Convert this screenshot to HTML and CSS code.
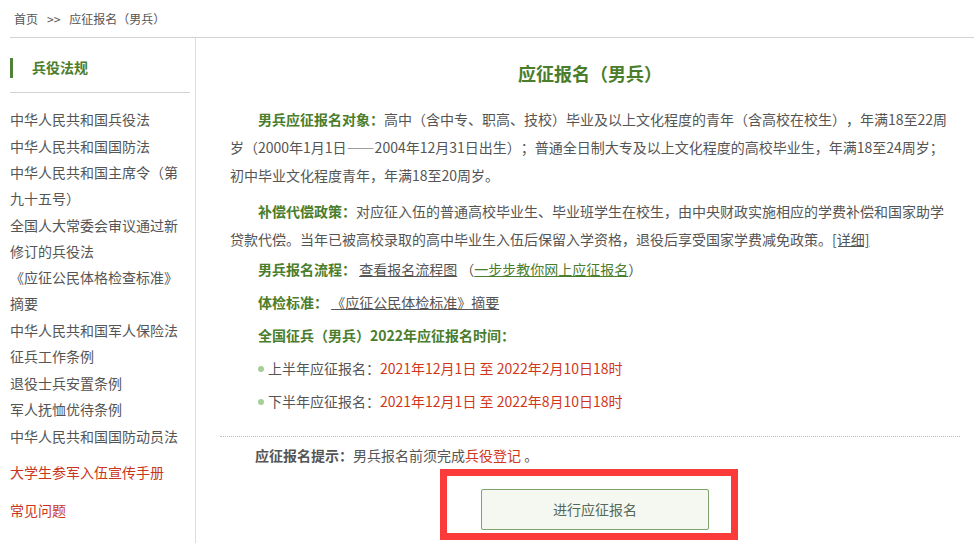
FILE: index.html
```html
<!DOCTYPE html>
<html lang="zh-CN">
<head>
    <meta charset="UTF-8">
    <title>应征报名（男兵）</title>
    <link rel="stylesheet" href="styles.css">
</head>
<body>
    <div class="crumbs">
        <a href="#">首页</a><span class="sep">&gt;&gt;</span><span>应征报名（男兵）</span>
    </div>

    <div class="page">
        <aside class="side">
            <h3 class="side-title">兵役法规</h3>
            <ul class="law-list">
                <li><a href="#">中华人民共和国兵役法</a></li>
                <li><a href="#">中华人民共和国国防法</a></li>
                <li><a href="#">中华人民共和国主席令（第九十五号）</a></li>
                <li><a href="#">全国人大常委会审议通过新修订的兵役法</a></li>
                <li><a href="#">《应征公民体格检查标准》摘要</a></li>
                <li><a href="#">中华人民共和国军人保险法</a></li>
                <li><a href="#">征兵工作条例</a></li>
                <li><a href="#">退役士兵安置条例</a></li>
                <li><a href="#">军人抚恤优待条例</a></li>
                <li><a href="#">中华人民共和国国防动员法</a></li>
            </ul>
            <a class="side-link first" href="#">大学生参军入伍宣传手册</a>
            <a class="side-link" href="#">常见问题</a>
        </aside>

        <main class="main">
            <h2 class="title">应征报名（男兵）</h2>
            <div class="intro">
                <p class="para"><b>男兵应征报名对象：</b>高中（含中专、职高、技校）毕业及以上文化程度的青年（含高校在校生），年满18至22周岁（2000年1月1日——2004年12月31日出生）；普通全日制大专及以上文化程度的高校毕业生，年满18至24周岁；初中毕业文化程度青年，年满18至20周岁。</p>
                <p class="para"><b>补偿代偿政策：</b>对应征入伍的普通高校毕业生、毕业班学生在校生，由中央财政实施相应的学费补偿和国家助学贷款代偿。当年已被高校录取的高中毕业生入伍后保留入学资格，退役后享受国家学费减免政策。<a class="plain" href="#">[详细]</a></p>
                <p class="row"><b>男兵报名流程：</b> <a class="plain" href="#">查看报名流程图</a> （<a class="green" href="#">一步步教你网上应征报名</a>）</p>
                <p class="row"><b>体检标准：</b> <a class="plain" href="#">《应征公民体检标准》摘要</a></p>
                <p class="row"><b>全国征兵（男兵）2022年应征报名时间：</b></p>
                <p class="row dot">上半年应征报名：<span class="red">2021年12月1日 至 2022年2月10日18时</span></p>
                <p class="row dot">下半年应征报名：<span class="red">2021年12月1日 至 2022年8月10日18时</span></p>
            </div>

            <div class="tip-box">
                <p class="tip"><b>应征报名提示：</b>男兵报名前须完成<a class="red" href="#">兵役登记</a> 。</p>
                <div class="btn-wrap">
                    <a class="btn" href="#">进行应征报名</a>
                    <span class="mark"></span>
                </div>
            </div>
        </main>
    </div>
</body>
</html>
```

FILE: styles.css
```css
body {
    margin: 0;
    font-family: "Noto Sans CJK SC", "Liberation Sans", sans-serif;
    font-size: 14px;
    color: #555;
    background-color: #fff;
    text-spacing-trim: space-all;
}

a {
    color: inherit;
    text-decoration: none;
}

/* breadcrumb */
.crumbs {
    height: 37px;
    line-height: 37px;
    margin-left: 10px;
    padding-left: 4px;
    font-size: 12px;
    border-bottom: 1px solid #d2d2d2;
}

.crumbs .sep {
    margin: 0 9px;
}

.page {
    display: flex;
    align-items: stretch;
    min-height: 505px;
}

/* left column */
.side {
    width: 180px;
    margin-left: 10px;
    padding-right: 5px;
    border-right: 1px solid #ddd;
}

.side-title {
    margin: 0;
    padding: 19px 0 14px;
    border-bottom: 1px solid #d2d2d2;
    font-size: 14px;
    color: #4a7d2c;
}

.side-title::before {
    content: "";
    display: inline-block;
    width: 3px;
    height: 20px;
    margin-right: 19px;
    vertical-align: -5px;
    background-color: #4f8236;
}

.law-list {
    list-style: none;
    margin: 0;
    padding: 13px 0 0;
}

.law-list li {
    line-height: 26px;
    padding-bottom: 0.5px;
}

.side-link {
    display: block;
    line-height: 26px;
    color: #c9361b;
}

.side-link.first {
    margin-top: 10px;
    margin-bottom: 12px;
}

/* right column */
.main {
    flex: 1;
    padding-left: 24px;
    padding-right: 14px;
}

.title {
    margin: 21px 0 18px;
    padding: 0 10px;
    text-align: center;
    font-size: 18px;
    line-height: 28px;
    color: #4a7d2c;
}

.intro {
    padding: 0 10px;
    width: 720px;
}

.intro b {
    color: #4a7d2c;
}

.para {
    margin: 0 0 8px;
    line-height: 28px;
    text-indent: 28px;
}

.para + .row {
    margin-top: -8px;
}

.row {
    margin: 0;
    padding-left: 28px;
    line-height: 33px;
}

.plain {
    text-decoration: underline;
}

.green {
    color: #4a7d2c;
    text-decoration: underline;
}

.red {
    color: #d2361a;
}

.dot::before {
    content: "";
    display: inline-block;
    width: 6px;
    height: 6px;
    border-radius: 50%;
    margin-right: 4px;
    vertical-align: 2px;
    background-color: #a6cf98;
}

.tip-box {
    margin-top: 18px;
    border-top: 1px dotted #bbb;
    padding-top: 4px;
}

.tip {
    margin: 0;
    padding-left: 35px;
    line-height: 28px;
}

.btn-wrap {
    position: relative;
    width: 228px;
    margin: 20px 0 0 261px;
}

.btn {
    display: block;
    height: 39px;
    line-height: 39px;
    text-align: center;
    color: #55695a;
    background-color: #f4f8f0;
    border: 1px solid #7da36d;
    border-radius: 2px;
}

/* red highlight frame drawn over the button */
.mark {
    position: absolute;
    left: -41px;
    top: -20px;
    width: 284px;
    height: 57px;
    border: 7px solid #fb3a3a;
    pointer-events: none;
}
```
